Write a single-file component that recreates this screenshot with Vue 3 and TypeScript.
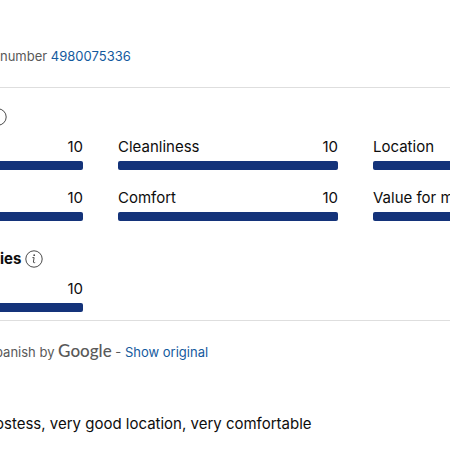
<script setup lang="ts">
interface Score {
  label?: string
  value?: number
}

const categories: Score[] = [
  { value: 10 },
  { label: 'Cleanliness', value: 10 },
  { label: 'Location' },
  { value: 10 },
  { label: 'Comfort', value: 10 },
  { label: 'Value for m' },
]

const facilities: Score[] = [{ value: 10 }]

const MAX_SCORE = 10

function barWidth(item: Score): string {
  return `${((item.value ?? MAX_SCORE) / MAX_SCORE) * 100}%`
}
</script>

<template>
  <main class="review">
    <p class="booking">number <a href="#booking">4980075336</a></p>

    <section class="scores">
      <div class="heading heading-cut">
        <svg class="info" viewBox="0 0 18 18" aria-hidden="true">
          <circle cx="9" cy="9" r="8.2" />
          <path d="M7.4 7.6h1.7l-.7 4.4c0 .8.8.9 1.8.4" />
          <circle class="dot" cx="9.2" cy="5.2" r=".9" />
        </svg>
      </div>
      <div class="grid">
        <div v-for="(item, i) in categories" :key="i" class="score">
          <div class="row">
            <span>{{ item.label }}</span>
            <span>{{ item.value }}</span>
          </div>
          <div class="track">
            <div class="fill" :style="{ width: barWidth(item) }"></div>
          </div>
        </div>
      </div>

      <h2 class="heading">
        ies
        <svg class="info" viewBox="0 0 18 18" aria-hidden="true">
          <circle cx="9" cy="9" r="8.2" />
          <path d="M7.4 7.6h1.7l-.7 4.4c0 .8.8.9 1.8.4" />
          <circle class="dot" cx="9.2" cy="5.2" r=".9" />
        </svg>
      </h2>
      <div class="grid">
        <div v-for="(item, i) in facilities" :key="i" class="score">
          <div class="row">
            <span>{{ item.label }}</span>
            <span>{{ item.value }}</span>
          </div>
          <div class="track">
            <div class="fill" :style="{ width: barWidth(item) }"></div>
          </div>
        </div>
      </div>
    </section>

    <div class="body">
      <p class="translation">
        panish by <span class="google">Google</span> - <a href="#original">Show original</a>
      </p>
      <p class="comment">ostess, very good location, very comfortable</p>
    </div>
  </main>
</template>

<style>
body {
  margin: 0;
  background: #fff;
}
</style>

<style scoped>
.review {
  overflow: hidden;
  padding: 46px 0 16px;
  color: #0d0d0d;
  font: 15px/20px Inter, 'Liberation Sans', sans-serif;
}

p,
h2 {
  margin: 0;
}

a {
  color: #145a9e;
  text-decoration: none;
}

.booking,
.translation {
  color: #595959;
  font-size: 13px;
  white-space: nowrap;
}

.booking {
  padding-bottom: 21px;
}

.scores {
  padding: 19px 0 8px;
  border-top: 1px solid #dedede;
  border-bottom: 1px solid #dedede;
}

.heading {
  display: flex;
  align-items: center;
  gap: 4px;
  height: 20px;
  font-size: 15px;
  font-weight: 700;
}

.heading-cut {
  margin-left: -11px;
}

.info {
  width: 18px;
  height: 18px;
  fill: none;
  stroke: #4a4a4a;
  stroke-width: 1;
}

.info .dot {
  fill: #4a4a4a;
  stroke: none;
}

.grid {
  display: grid;
  grid-template-columns: minmax(0, 83fr) minmax(0, 220fr) minmax(0, 77fr);
  gap: 18px 35px;
  padding: 10px 0 28px;
}

.grid:last-child {
  padding-bottom: 0;
}

.row {
  display: flex;
  justify-content: space-between;
  height: 20px;
  margin-bottom: 4px;
  white-space: nowrap;
}

.track {
  height: 9px;
}

.fill {
  height: 100%;
  border-radius: 2px;
  background: #14337a;
}

.score:nth-child(3n + 1) .fill {
  border-radius: 0 2px 2px 0;
}

.score:nth-child(3n) .fill {
  border-radius: 2px 0 0 2px;
}

.body {
  margin-left: -5px;
}

.translation {
  padding-top: 20px;
}

.google {
  font-family: Lato, 'Liberation Sans', sans-serif;
  font-size: 17px;
  font-weight: 500;
}

.comment {
  padding-top: 52px;
}
</style>
